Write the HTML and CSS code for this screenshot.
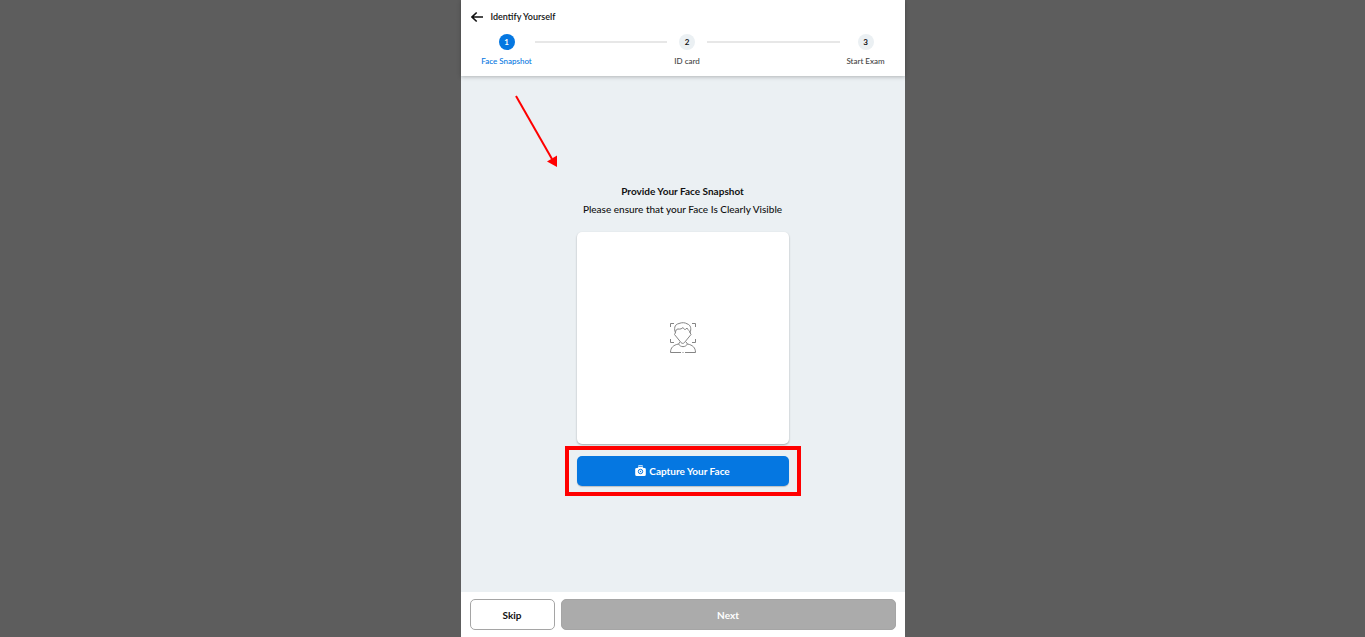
FILE: index.html
```html
<!DOCTYPE html>
<html lang="en">
<head>
    <meta charset="UTF-8">
    <meta name="viewport" content="width=device-width, initial-scale=1.0">
    <title>Identify Yourself</title>
    <link rel="stylesheet" href="styles.css">
</head>
<body>
    <div class="panel">
        <!-- Header with steps -->
        <header class="header">
            <div class="title-bar">
                <button type="button" class="back-btn" aria-label="Back">
                    <svg width="12" height="12" viewBox="0 0 12 12" fill="none" stroke="currentColor" stroke-width="1.6">
                        <path d="M12 6H1M5.700 1.500L1 6l4.700 4.500"/>
                    </svg>
                </button>
                <h1>Identify Yourself</h1>
            </div>
            <div class="steps">
                <div class="step step-face active">
                    <span class="step-number">1</span>
                    <span class="step-label">Face Snapshot</span>
                </div>
                <div class="step-line"></div>
                <div class="step step-id">
                    <span class="step-number">2</span>
                    <span class="step-label">ID card</span>
                </div>
                <div class="step-line"></div>
                <div class="step step-exam">
                    <span class="step-number">3</span>
                    <span class="step-label">Start Exam</span>
                </div>
            </div>
        </header>

        <!-- Face snapshot -->
        <main class="content">
            <svg class="arrow" width="44" height="74" viewBox="0 0 44 74">
                <path d="M2 2L38 65" stroke="#ff0000" stroke-width="2"/>
                <path d="M33 67.500L43 61.500V73z" fill="#ff0000"/>
            </svg>
            <div class="capture">
                <h2>Provide Your Face Snapshot</h2>
                <p>Please ensure that your Face Is Clearly Visible</p>
                <div class="preview">
                    <svg width="28" height="32" viewBox="0 0 28 32" fill="none" stroke="#858585" stroke-width="1" stroke-linejoin="round">
                        <path d="M1.500 5V1.500H5M23 1.500h3.500V5M1.500 17v3.500H5M23 20.500h3.500V17"/>
                        <path d="M6.500 11C5 7 5 2.500 10 1.500c3-1.200 6-1 8 .3 4 1.200 4.500 5 3 9.200"/>
                        <path d="M6.500 10.500c0-2 1-3.500 2.500-3.500 2.500.5 4-.5 5-1.500 1 2 2 2.500 3 1.500l1-1c0 2 3 2 3 4.500l1 2-6.500 8c-1 1.200-2.500 1.200-3.500 0L5.500 12.500z"/>
                        <path d="M12 30.500H1.500c0-5 3-7.500 8-8.500l1.500-2M17 20l1.500 2c5 1 8 3.500 8 8.500H16M13.500 30.500h1M9.500 22c2 3.500 7 3.500 9 0"/>
                    </svg>
                </div>
                <div class="capture-action">
                    <button type="button" class="capture-btn">
                        <svg width="11" height="11" viewBox="0 0 11 11">
                            <path fill="#fff" d="M3 1.500Q3 .3 4 .3h3q1 0 1 1.200h-.8V1.200H3.800v.3zM1.500 3H2.500l1-1h4l1 1h1q1.300 0 1.300 1.300v5.200q0 1.500-1.500 1.500h-7.500Q.2 11 .2 9.500V4.300Q.2 3 1.500 3z"/>
                            <circle cx="5.500" cy="6.500" r="2.200" fill="none" stroke="#0577e1"/>
                            <circle cx="5.500" cy="6.500" r=".7" fill="#0577e1"/>
                        </svg>
                        Capture Your Face
                    </button>
                </div>
            </div>
        </main>

        <!-- Bottom buttons -->
        <footer class="footer">
            <button type="button" class="skip-btn">Skip</button>
            <button type="button" class="next-btn" disabled>Next</button>
        </footer>
    </div>
</body>
</html>
```
FILE: styles.css
```css
* {
    box-sizing: border-box;
}
body {
    margin: 0;
    background-color: #5d5d5d;
    font-family: Lato, "Liberation Sans", sans-serif;
    color: #111;
}
h1, h2, p {
    margin: 0;
}
button {
    font-family: inherit;
    padding: 0;
    cursor: pointer;
}
.panel {
    display: flex;
    flex-direction: column;
    max-width: 444px;
    min-height: 100vh;
    margin: 0 auto;
    background-color: #fff;
}

/* Header */
.header {
    padding: 9px 0 8px;
    box-shadow: 0 1px 4px rgba(0, 0, 0, 0.25);
    z-index: 1;
}
.title-bar {
    display: flex;
    align-items: center;
    gap: 8px;
    padding: 0 10px;
}
.title-bar h1 {
    font-size: 9px;
    line-height: 16px;
    font-weight: 600;
}
.back-btn {
    display: flex;
    border: none;
    background: none;
    color: #111;
}
.steps {
    display: flex;
    margin-top: 9px;
    padding: 0 13px 0 18px;
}
.step {
    display: flex;
    flex-direction: column;
    align-items: center;
    gap: 5px;
    font-size: 8px;
    white-space: nowrap;
    color: #444;
}
.step-face {
    width: 56px;
}
.step-id {
    width: 40px;
}
.step-exam {
    width: 52px;
}
.step-number {
    width: 16px;
    border-radius: 50%;
    background-color: #ebf0f3;
    color: #111;
    line-height: 16px;
    text-align: center;
    font-weight: bold;
}
.step-label {
    line-height: 13px;
    font-weight: 500;
}
.step.active {
    color: #0577e1;
}
.active .step-number {
    background-color: #0577e1;
    color: #fff;
}
.step-line {
    flex: 1;
    height: 2px;
    margin-top: 7px;
    background-color: #e7e7e7;
}

/* Content */
.content {
    position: relative;
    flex: 1;
    display: flex;
    align-items: center;
    justify-content: center;
    background-color: #ebf0f3;
}
.arrow {
    position: absolute;
    top: 18px;
    left: 53px;
}
.capture {
    width: 212px;
    text-align: center;
}
.capture h2 {
    font-size: 10px;
    line-height: 16px;
    font-weight: bold;
}
.capture p {
    margin-top: 2px;
    font-size: 10px;
    line-height: 16px;
    font-weight: 500;
    white-space: nowrap;
}
.preview {
    display: flex;
    align-items: center;
    justify-content: center;
    aspect-ratio: 1;
    margin-top: 15px;
    border-radius: 5px;
    background-color: #fff;
    box-shadow: 0 1px 2px rgba(0, 0, 0, 0.3);
}
.capture-action {
    position: relative;
    margin-top: 12px;
}
/* Red frame around the capture button */
.capture-action::after {
    content: "";
    position: absolute;
    inset: -10px -12px;
    border: 4px solid #ff0000;
    pointer-events: none;
}
.capture-btn {
    display: flex;
    align-items: center;
    justify-content: center;
    gap: 3px;
    width: 100%;
    height: 30px;
    border: none;
    border-radius: 5px;
    background-color: #0577e1;
    box-shadow: 0 1px 1px rgba(0, 0, 0, 0.2);
    color: #fff;
    font-size: 10px;
    font-weight: bold;
}

/* Footer */
.footer {
    display: flex;
    gap: 6px;
    padding: 7px 9px;
}
.skip-btn, .next-btn {
    height: 31px;
    border: 1px solid #a5a5a5;
    border-radius: 5px;
    font-size: 10px;
    font-weight: bold;
}
.skip-btn {
    width: 85px;
    background-color: #fff;
    color: #111;
}
.next-btn {
    flex: 1;
    background-color: #ababab;
    color: #fff;
    cursor: default;
}
```
